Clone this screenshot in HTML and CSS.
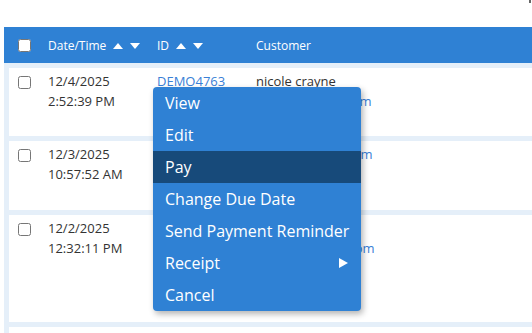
FILE: index.html
```html
<!DOCTYPE html>
<html>
<head>
<meta charset="utf-8">
<link rel="stylesheet" href="styles.css">
</head>
<body>
<div class="topbar"><span class="topmark"></span></div>
<div class="table">
  <div class="thead">
    <div class="cell cb"><input type="checkbox" class="check"></div>
    <div class="cell th">Date/Time
      <svg class="sort" width="27" height="6" viewBox="0 0 27 6"><polygon points="0,6 5,0 10,6" fill="#fff"/><polygon points="17,0 27,0 22,6" fill="#fff"/></svg>
    </div>
    <div class="cell th">ID
      <svg class="sort" width="27" height="6" viewBox="0 0 27 6"><polygon points="0,6 5,0 10,6" fill="#fff"/><polygon points="17,0 27,0 22,6" fill="#fff"/></svg>
    </div>
    <div class="cell th">Customer</div>
  </div>
  <div class="tbody">
    <div class="row">
      <div class="cell cb"><input type="checkbox" class="check"></div>
      <div class="cell"><div>12/4/2025</div><div>2:52:39 PM</div></div>
      <div class="cell"><a class="link">DEMO4763</a></div>
      <div class="cell"><div>nicole crayne</div><a class="link">ncrayne@mail.com</a></div>
    </div>
    <div class="row row-b">
      <div class="cell cb"><input type="checkbox" class="check"></div>
      <div class="cell"><div>12/3/2025</div><div>10:57:52 AM</div></div>
      <div class="cell"><a class="link">DEMO4762</a></div>
      <div class="cell"><a class="link">jmoris@yahoo.com</a></div>
    </div>
    <div class="row row-tall">
      <div class="cell cb"><input type="checkbox" class="check"></div>
      <div class="cell"><div>12/2/2025</div><div>12:32:11 PM</div></div>
      <div class="cell"><a class="link">DEMO4761</a></div>
      <div class="cell"><div>alan hughes</div><a class="link">hughes@gmail.com</a></div>
    </div>
    <div class="row"></div>
  </div>
</div>
<div class="menu">
  <div class="item">View</div>
  <div class="item">Edit</div>
  <div class="item active">Pay</div>
  <div class="item">Change Due Date</div>
  <div class="item">Send Payment Reminder</div>
  <div class="item">Receipt <svg class="sub" width="9" height="10" viewBox="0 0 9 10"><polygon points="0,0 9,5 0,10" fill="#fff"/></svg></div>
  <div class="item">Cancel</div>
</div>
</body>
</html>
```
FILE: styles.css
```css
html, body {
  margin: 0;
  padding: 0;
  background: #fff;
  font-family: "Open Sans", "Noto Sans", sans-serif;
  font-size: 13px;
  color: #333;
  overflow: hidden;
}
.topbar {
  height: 27px;
  display: flex;
  justify-content: flex-end;
  align-items: flex-start;
}
.topmark {
  width: 2px;
  height: 3px;
  background: #666;
  margin-right: 1px;
}
.table {
  margin-left: 4px;
  background: #e5eff9;
  height: 306px;
  overflow: hidden;
}
.thead {
  height: 36px;
  background: #2f81d4;
  display: grid;
  grid-template-columns: 30px 109px 99px 1fr;
  align-items: center;
  padding-left: 14px;
  color: #fff;
  font-size: 12px;
}
.th {
  display: flex;
  align-items: center;
  white-space: nowrap;
}
.sort {
  margin-left: 7px;
  margin-top: 1px;
}
.check {
  margin: 0;
  width: 13px;
  height: 13px;
  display: block;
}
.tbody {
  padding: 5px 0 0 5px;
  display: flex;
  flex-direction: column;
  gap: 5px;
}
.row {
  background: #fff;
  min-height: 68px;
  box-sizing: border-box;
  display: grid;
  grid-template-columns: 30px 109px 99px 1fr;
  padding: 3px 0 0 9px;
  line-height: 20px;
  align-items: start;
}
.row-b { min-height: 69px; }
.row-tall { min-height: 107px; }
.row .cb { padding-top: 5px; }
.cell { white-space: nowrap; }
.link {
  color: #3a80d6;
  display: block;
}
.menu {
  position: absolute;
  left: 153px;
  top: 87px;
  width: 208px;
  background: #2f81d4;
  border-radius: 4px;
  box-shadow: 2px 3px 6px rgba(0, 0, 0, 0.3);
  overflow: hidden;
}
.item {
  height: 32px;
  line-height: 32px;
  padding: 0 13px 0 12px;
  font-size: 16px;
  color: #fff;
  display: flex;
  align-items: center;
  justify-content: space-between;
  white-space: nowrap;
}
.item.active {
  background: #174a7a;
}
.sub { display: block; }
```
